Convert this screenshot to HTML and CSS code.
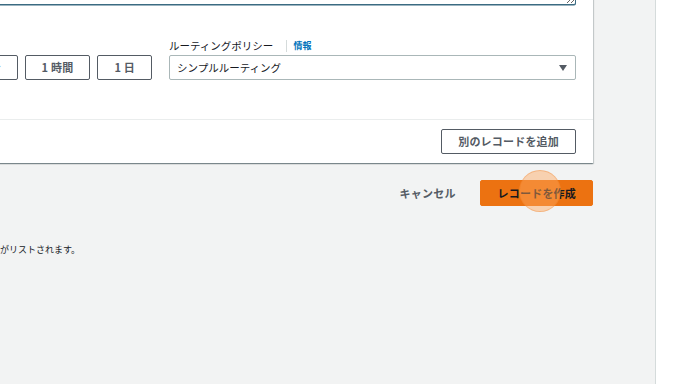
FILE: index.html
```html
<!DOCTYPE html>
<html lang="ja">
<head>
  <meta charset="UTF-8">
  <meta name="viewport" content="width=device-width, initial-scale=1.0">
  <title>レコードを作成</title>
  <link rel="stylesheet" href="styles.css">
</head>
<body>
  <div class="layout">
    <main class="main">
      <div class="wrap">
        <section class="card">
          <div class="card_body">
            <textarea class="value_box"></textarea>
            <div class="form_row">
              <div class="ttl_field">
                <button type="button" class="btn">1 分</button>
                <button type="button" class="btn">1 時間</button>
                <button type="button" class="btn">1 日</button>
              </div>
              <div class="policy_field">
                <p class="label">ルーティングポリシー<a href="#" class="info">情報</a></p>
                <div class="select">
                  <span>シンプルルーティング</span>
                  <span class="caret"></span>
                </div>
              </div>
            </div>
          </div>
          <div class="card_footer">
            <button type="button" class="btn">別のレコードを追加</button>
          </div>
        </section>

        <div class="actions">
          <button type="button" class="btn_link">キャンセル</button>
          <button type="button" class="btn btn_primary">レコードを作成</button>
          <span class="click_ring"></span>
        </div>

        <p class="note">ここにはレコードがリストされます。</p>
      </div>
    </main>
    <aside class="help"></aside>
  </div>
</body>
</html>
```

FILE: styles.css
```css
*{
  box-sizing: border-box;
  margin: 0;
  padding: 0;
}
body{
  font-family: "Noto Sans CJK JP", "Noto Sans", sans-serif;
  color: #16191f;
  background-color: #fff;
  width: 688px;
  height: 384px;
  overflow: hidden;
}
.layout{
  display: flex;
  height: 384px;
}
.main{
  width: 656px;
  background-color: #f2f3f3;
  border-right: 1px solid #d5dbdb;
  overflow: hidden;
}
.help{
  flex: 1;
  background-color: #fff;
}
.wrap{
  width: 653px;
  margin-left: -60px;
}

/* card */
.card{
  background-color: #fff;
  margin-top: -60px;
  box-shadow: 0 1px 1px 0 rgba(0, 28, 36, 0.3), 1px 1px 1px 0 rgba(0, 28, 36, 0.15), -1px 1px 1px 0 rgba(0, 28, 36, 0.15);
}
.card_body{
  padding: 0 17px 39px 17px;
}
.value_box{
  display: block;
  width: 100%;
  height: 65px;
  border: 1px solid #3b6b82;
  border-radius: 2px;
  box-shadow: 0 0.5px 0 0 #3b6b82;
  outline: none;
}
.form_row{
  display: flex;
  align-items: flex-end;
  gap: 17px;
  margin-top: 33px;
}
.ttl_field{
  flex: 1;
  display: flex;
  justify-content: flex-end;
  gap: 7px;
}
.policy_field{
  width: 407px;
}
.label{
  font-size: 10.5px;
  line-height: 16px;
  margin-bottom: 1px;
  display: flex;
  align-items: center;
}
.info{
  font-size: 9px;
  font-weight: 700;
  line-height: 12px;
  color: #0073bb;
  text-decoration: none;
  margin-left: 13px;
  padding-left: 6px;
  border-left: 1px solid #d5dbdb;
}
.select{
  height: 25px;
  border: 1px solid #aab7b8;
  border-radius: 2px;
  display: flex;
  align-items: center;
  justify-content: space-between;
  padding: 0 8px 0 7px;
  font-size: 10.5px;
}
.caret{
  width: 0;
  height: 0;
  border-left: 4.5px solid transparent;
  border-right: 4.5px solid transparent;
  border-top: 6px solid #545b64;
}

/* buttons */
.btn{
  font-family: inherit;
  font-size: 11px;
  font-weight: 700;
  letter-spacing: 0.2px;
  line-height: 23px;
  height: 25px;
  padding: 0 16px;
  color: #545b64;
  background-color: #fff;
  border: 1px solid #545b64;
  border-radius: 2px;
  cursor: pointer;
}
.card_footer{
  border-top: 1px solid #eaeded;
  padding: 9px 17px;
  display: flex;
  justify-content: flex-end;
}
.actions{
  position: relative;
  display: flex;
  justify-content: flex-end;
  align-items: center;
  gap: 24px;
  margin-top: 17px;
}
.btn_link{
  font-family: inherit;
  font-size: 11px;
  font-weight: 700;
  letter-spacing: 0.2px;
  color: #545b64;
  background: none;
  border: none;
  cursor: pointer;
}
.btn_primary{
  background-color: #ec7211;
  border-color: #ec7211;
  color: #16191f;
  padding: 0 16px 0 17px;
  height: 26px;
  line-height: 24px;
}
.click_ring{
  position: absolute;
  left: 579px;
  top: -10px;
  width: 42px;
  height: 42px;
  border-radius: 50%;
  background-color: rgba(255, 168, 96, 0.45);
  border: 1px solid rgba(236, 114, 17, 0.3);
}
.note{
  font-size: 9px;
  line-height: 14px;
  margin: 37px 0 0 -12px;
}
```
